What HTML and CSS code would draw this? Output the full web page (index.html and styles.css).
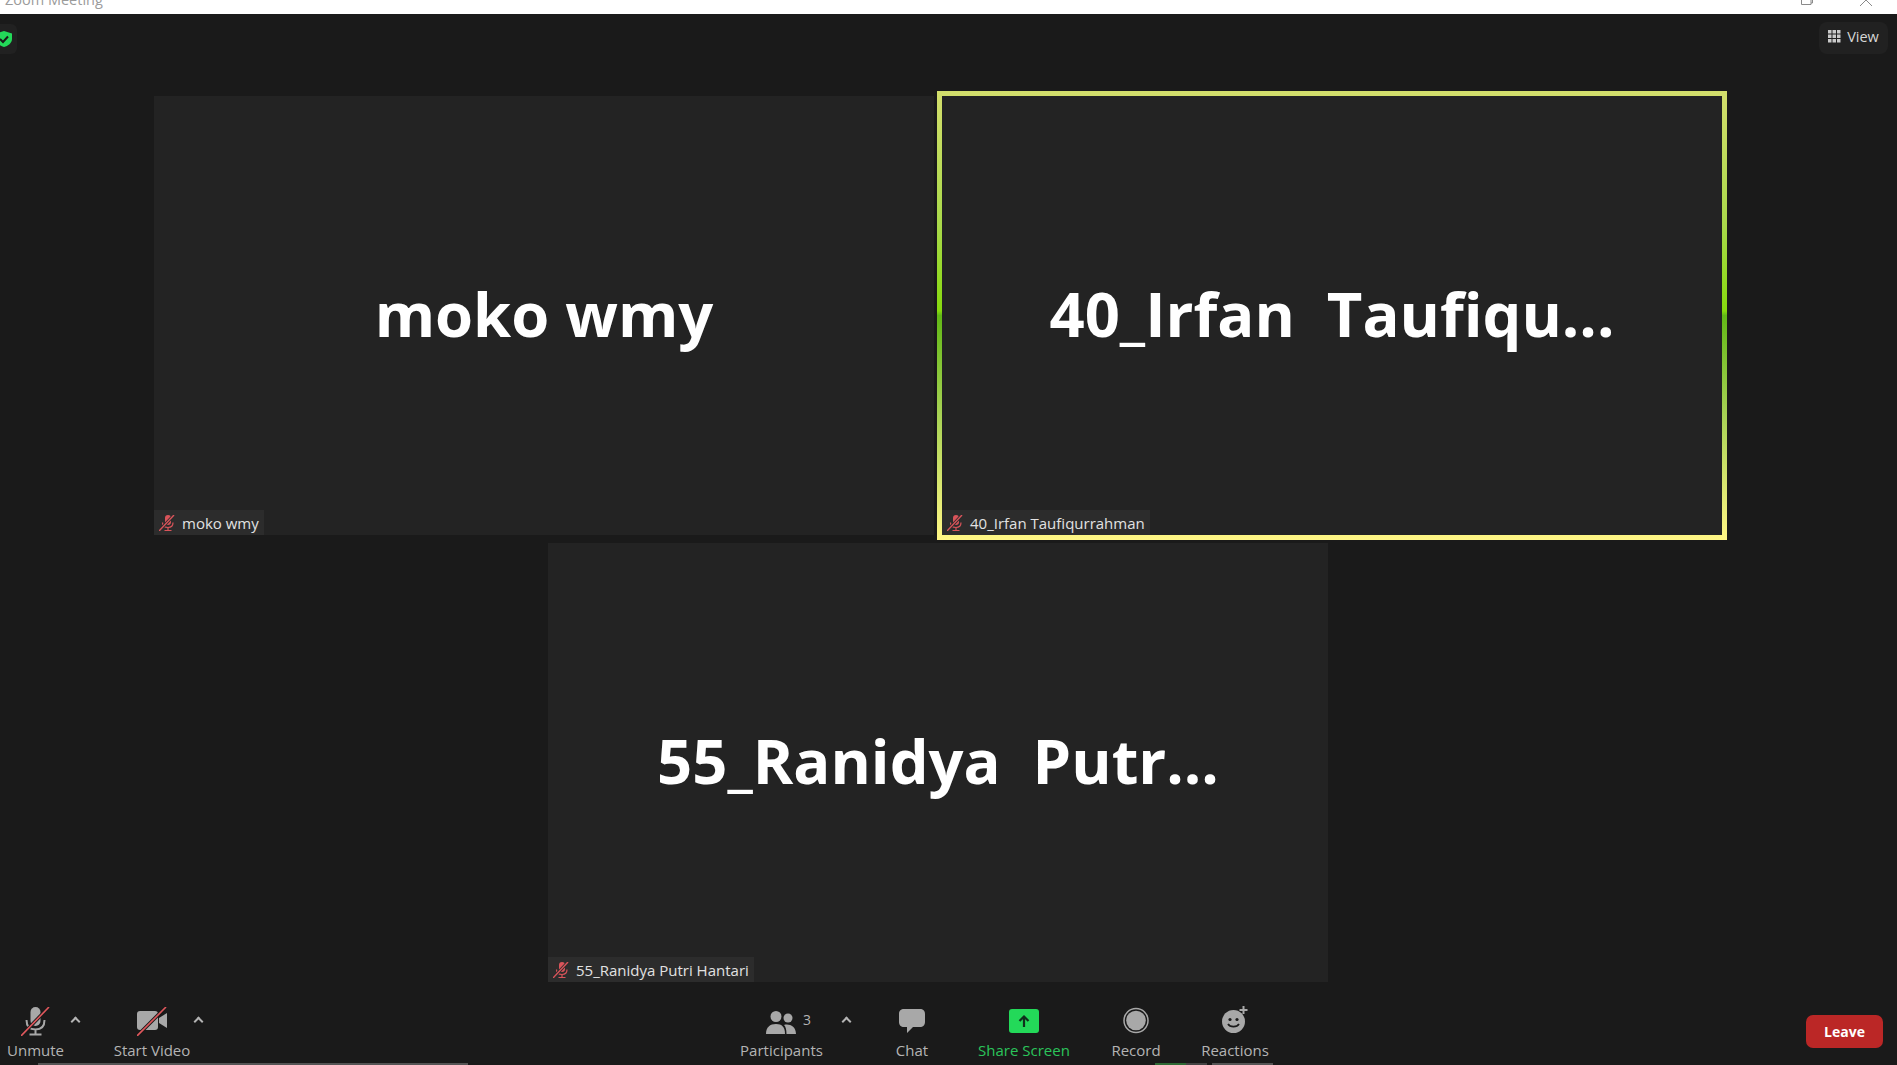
FILE: index.html
```html
<html>
<head>
  <title>Zoom Meeting</title>
  <link rel="stylesheet" href="styles.css">
</head>
<body>
  <div class="titlebar">
    <span class="title">Zoom Meeting</span>
    <div class="winbtns">
      <svg width="12" height="6" viewBox="0 0 12 6"><path d="M0.500 0V4.500H10V0M10 3H11.500V0" fill="none" stroke="#8a8a8a"/></svg>
      <svg width="12" height="6" viewBox="0 0 12 6"><path d="M0 6L6 0L12 6" fill="none" stroke="#8a8a8a"/></svg>
    </div>
  </div>

  <div class="stage">
    <div class="shield">
      <svg width="16" height="18" viewBox="0 0 16 18"><path d="M4 1L12 3.500V9C12 13 8 16 4 17C0 16 -4 13 -4 9V3.500Z" fill="#23d959"/><path d="M0 9L3 12L8 6.500" fill="none" stroke="#1a1a1a" stroke-width="2"/></svg>
    </div>
    <div class="viewbtn">
      <svg width="13" height="13" viewBox="0 0 13 13" fill="#c9c9c9"><rect width="3.500" height="3.500"/><rect x="4.500" width="3.500" height="3.500"/><rect x="9" width="3.500" height="3.500"/><rect y="4.500" width="3.500" height="3.500"/><rect x="4.500" y="4.500" width="3.500" height="3.500"/><rect x="9" y="4.500" width="3.500" height="3.500"/><rect y="9" width="3.500" height="3.500"/><rect x="4.500" y="9" width="3.500" height="3.500"/><rect x="9" y="9" width="3.500" height="3.500"/></svg>
      View
    </div>

    <div class="row">
      <div class="tile">
        <div class="bigname">moko wmy</div>
        <div class="nametag">
          <svg width="16" height="16" viewBox="0 0 16 16"><rect x="6" y="0" width="6" height="10" rx="3" fill="#d9545a"/><path d="M3.500 7.500C3.500 11 6 12.500 9 12.500C12 12.500 14 11 14 7.500M9 12.500V15M5.500 15.500H12.500" fill="none" stroke="#d9545a" stroke-width="1.200"/><path d="M0 16L15 0" stroke="#2c2c2c" stroke-width="3"/><path d="M0 16L15 0" stroke="#d9545a" stroke-width="1.400"/></svg>
          moko wmy
        </div>
      </div>
      <div class="tile active">
        <div class="bigname">40_Irfan&nbsp; Taufiqu...</div>
        <div class="nametag">
          <svg width="16" height="16" viewBox="0 0 16 16"><rect x="6" y="0" width="6" height="10" rx="3" fill="#d9545a"/><path d="M3.500 7.500C3.500 11 6 12.500 9 12.500C12 12.500 14 11 14 7.500M9 12.500V15M5.500 15.500H12.500" fill="none" stroke="#d9545a" stroke-width="1.200"/><path d="M0 16L15 0" stroke="#2c2c2c" stroke-width="3"/><path d="M0 16L15 0" stroke="#d9545a" stroke-width="1.400"/></svg>
          40_Irfan Taufiqurrahman
        </div>
      </div>
    </div>
    <div class="row">
      <div class="tile">
        <div class="bigname">55_Ranidya&nbsp; Putr...</div>
        <div class="nametag">
          <svg width="16" height="16" viewBox="0 0 16 16"><rect x="6" y="0" width="6" height="10" rx="3" fill="#d9545a"/><path d="M3.500 7.500C3.500 11 6 12.500 9 12.500C12 12.500 14 11 14 7.500M9 12.500V15M5.500 15.500H12.500" fill="none" stroke="#d9545a" stroke-width="1.200"/><path d="M0 16L15 0" stroke="#2c2c2c" stroke-width="3"/><path d="M0 16L15 0" stroke="#d9545a" stroke-width="1.400"/></svg>
          55_Ranidya Putri Hantari
        </div>
      </div>
    </div>
  </div>

  <div class="toolbar">
    <div class="toolgroup leftgroup">
      <div class="tool unmute">
        <svg width="29" height="29" viewBox="0 0 29 29"><rect x="9.500" y="0" width="10" height="19" rx="5" fill="#a8a8a8"/><path d="M5.500 13C5.500 20 9 22.500 14.500 22.500C20 22.500 23.500 20 23.500 13M14.500 22.500V27M8.500 27.500H20.500" fill="none" stroke="#a8a8a8" stroke-width="2"/><path d="M0 29L28 0" stroke="#1a1a1a" stroke-width="3.500"/><path d="M0 29L28 0" stroke="#e0575c" stroke-width="1.600"/></svg>
        <span>Unmute</span>
      </div>
      <span class="caret caret1"></span>
      <div class="tool startvideo">
        <svg width="30" height="29" viewBox="0 0 30 29"><rect x="0" y="4" width="21" height="19" rx="3" fill="#a8a8a8"/><path d="M22 11L30 6V21L22 16Z" fill="#a8a8a8"/><path d="M0 29L29 0" stroke="#1a1a1a" stroke-width="3.500"/><path d="M0 29L29 0" stroke="#e0575c" stroke-width="1.600"/></svg>
        <span>Start Video</span>
      </div>
      <span class="caret caret2"></span>
    </div>

    <div class="toolgroup midgroup">
      <div class="tool participants">
        <div class="iconline">
          <svg width="30" height="23" viewBox="0 0 30 23" fill="#a8a8a8"><circle cx="10" cy="5.500" r="5.500"/><circle cx="22" cy="7" r="4.500"/><path d="M0 23C0 16 4 13 10 13C16 13 19 16 19 23Z"/><path d="M20.500 23C20.500 18 19.500 15.500 18 14C23 12.500 30 15 30 23Z"/></svg>
          <span class="count">3</span>
        </div>
        <span>Participants</span>
      </div>
      <span class="caret caret3"></span>
      <div class="tool chat">
        <svg width="26" height="24" viewBox="0 0 26 24"><path d="M5 0H21C24 0 26 1.500 26 5V13C26 16 24 18 21 18H14L8 24V18H5C2 18 0 16 0 13V5C0 1.500 2 0 5 0Z" fill="#a8a8a8"/></svg>
        <span>Chat</span>
      </div>
      <div class="tool share">
        <svg width="30" height="24" viewBox="0 0 30 24"><rect width="30" height="24" rx="3" fill="#23d959"/><path d="M15 18V8M10.500 12L15 7.500L19.500 12" fill="none" stroke="#10301c" stroke-width="2.200"/></svg>
        <span>Share Screen</span>
      </div>
      <div class="tool record">
        <svg width="26" height="27" viewBox="0 0 26 27"><circle cx="13" cy="13.500" r="12" fill="none" stroke="#a8a8a8" stroke-width="1.500"/><circle cx="13" cy="13.500" r="9.800" fill="#a8a8a8"/></svg>
        <span>Record</span>
      </div>
      <div class="tool reactions">
        <svg width="27" height="28" viewBox="0 0 27 28"><circle cx="11.500" cy="16.500" r="11.500" fill="#a8a8a8"/><circle cx="8" cy="14.500" r="1.600" fill="#1a1a1a"/><circle cx="15" cy="14.500" r="1.600" fill="#1a1a1a"/><path d="M6 19C8 22.500 15 22.500 17 19" fill="none" stroke="#1a1a1a" stroke-width="1.700"/><path d="M21.500 1V9M17.500 5H25.500" stroke="#a8a8a8" stroke-width="2"/></svg>
        <span>Reactions</span>
      </div>
    </div>

    <button class="leave">Leave</button>
  </div>

  <div class="taskstrip">
    <i class="seg seg1"></i>
    <i class="seg seg2"></i>
    <i class="seg seg3"></i>
    <i class="seg seg4"></i>
  </div>
</body>
</html>
```
FILE: styles.css
```css
html, body {
  margin: 0;
  padding: 0;
  height: 100%;
  overflow: hidden;
}

body {
  background-color: #1a1a1a;
  font-family: "Open Sans", "Noto Sans", sans-serif;
  display: flex;
  flex-direction: column;
  width: 1897px;
  height: 1065px;
}

.titlebar {
  height: 14px;
  flex: none;
  background-color: #fff;
  display: flex;
  justify-content: space-between;
  overflow: hidden;
  padding-left: 5px;
}

.title {
  font-size: 14.500px;
  line-height: 18px;
  margin-top: -9px;
  color: #9b9b9b;
}

.winbtns {
  display: flex;
  gap: 47px;
  padding-right: 25px;
}

.stage {
  flex: none;
  height: 984px;
  box-sizing: border-box;
  padding: 82px 21px 0 0;
  position: relative;
  display: flex;
  flex-direction: column;
  gap: 8px;
}

.shield {
  position: absolute;
  left: 0;
  top: 10px;
  width: 17px;
  height: 30px;
  background-color: #212121;
  border-radius: 0 6px 6px 0;
  overflow: hidden;
}

.shield svg {
  display: block;
  margin-top: 6px;
}

.viewbtn {
  position: absolute;
  right: 9px;
  top: 8px;
  width: 69px;
  height: 32px;
  box-sizing: border-box;
  padding-bottom: 4px;
  background-color: #212121;
  border-radius: 8px;
  color: #d6d6d6;
  font-size: 14.500px;
  display: flex;
  align-items: center;
  justify-content: center;
  gap: 6px;
}

.row {
  display: flex;
  justify-content: center;
  gap: 8px;
}

.tile {
  width: 780px;
  height: 439px;
  padding-bottom: 6px;
  box-sizing: border-box;
  background-color: #232323;
  position: relative;
  display: flex;
  align-items: center;
  justify-content: center;
}

.tile.active::before {
  content: "";
  position: absolute;
  top: -5px;
  left: -5px;
  right: -5px;
  bottom: -5px;
  padding: 5px;
  background: linear-gradient(#d3de6c 0%, #a9d94a 30%, #86d90e 49%, #62b816 50%, #a7d254 72%, #fff685 100%);
  -webkit-mask: linear-gradient(#000 0 0) content-box, linear-gradient(#000 0 0);
  -webkit-mask-composite: xor;
  mask-composite: exclude;
}

.bigname {
  color: #fff;
  font-size: 61.500px;
  font-weight: 700;
  white-space: nowrap;
}

.nametag {
  position: absolute;
  left: 0;
  bottom: 0;
  height: 25px;
  background-color: #2c2c2c;
  color: #e2e2e2;
  font-size: 15px;
  display: flex;
  align-items: center;
  gap: 7px;
  padding: 0 5px;
}

.toolbar {
  flex: 1;
  position: relative;
}

.toolgroup {
  display: flex;
  position: absolute;
  top: 9px;
}

.leftgroup {
  left: 0;
}

.midgroup {
  left: 741px;
}

.tool {
  display: flex;
  flex-direction: column;
  align-items: center;
  color: #b4b4b4;
  font-size: 15px;
  height: 53px;
  justify-content: space-between;
  white-space: nowrap;
}

.iconline {
  display: flex;
  align-items: flex-start;
  align-self: flex-start;
  gap: 7px;
  margin-left: 25px;
  margin-top: 4px;
}

.count {
  font-size: 14px;
  line-height: 17px;
}

.tool.share {
  color: #2bc45a;
}

.unmute { width: 71px; }
.startvideo { width: 80px; margin-left: 33px; }
.participants { width: 81px; }
.chat { width: 40px; margin-left: 42px; }
.share { width: 90px; margin-left: 47px; }
.record { width: 60px; margin-left: 37px; }
.reactions { width: 70px; margin-left: 34px; }

.chat svg, .share svg { margin-top: 2px; }
.reactions svg { margin-top: -2px; }

.caret {
  width: 5px;
  height: 5px;
  border-top: 2px solid #b4b4b4;
  border-left: 2px solid #b4b4b4;
  transform: rotate(45deg);
  margin-top: 11px;
}

.caret1 { margin-left: 1px; }
.caret2 { margin-left: 3px; }
.caret3 { margin-left: 21px; }

.leave {
  position: absolute;
  top: 17px;
  right: 14px;
  width: 77px;
  height: 33px;
  border: 0;
  border-radius: 7px;
  background-color: #bb2726;
  color: #fff;
  font-family: "Open Sans", sans-serif;
  font-size: 14px;
  font-weight: 700;
}

.taskstrip {
  position: absolute;
  left: 0;
  bottom: 0;
  width: 100%;
  height: 2px;
}

.seg {
  position: absolute;
  top: 0;
  height: 2px;
  background-color: #555;
}

.seg1 { left: 38px; width: 430px; }
.seg2 { left: 1155px; width: 31px; background-color: #2f6a35; }
.seg3 { left: 1186px; width: 21px; background-color: #444; }
.seg4 { left: 1212px; width: 61px; background-color: #555; }
```
